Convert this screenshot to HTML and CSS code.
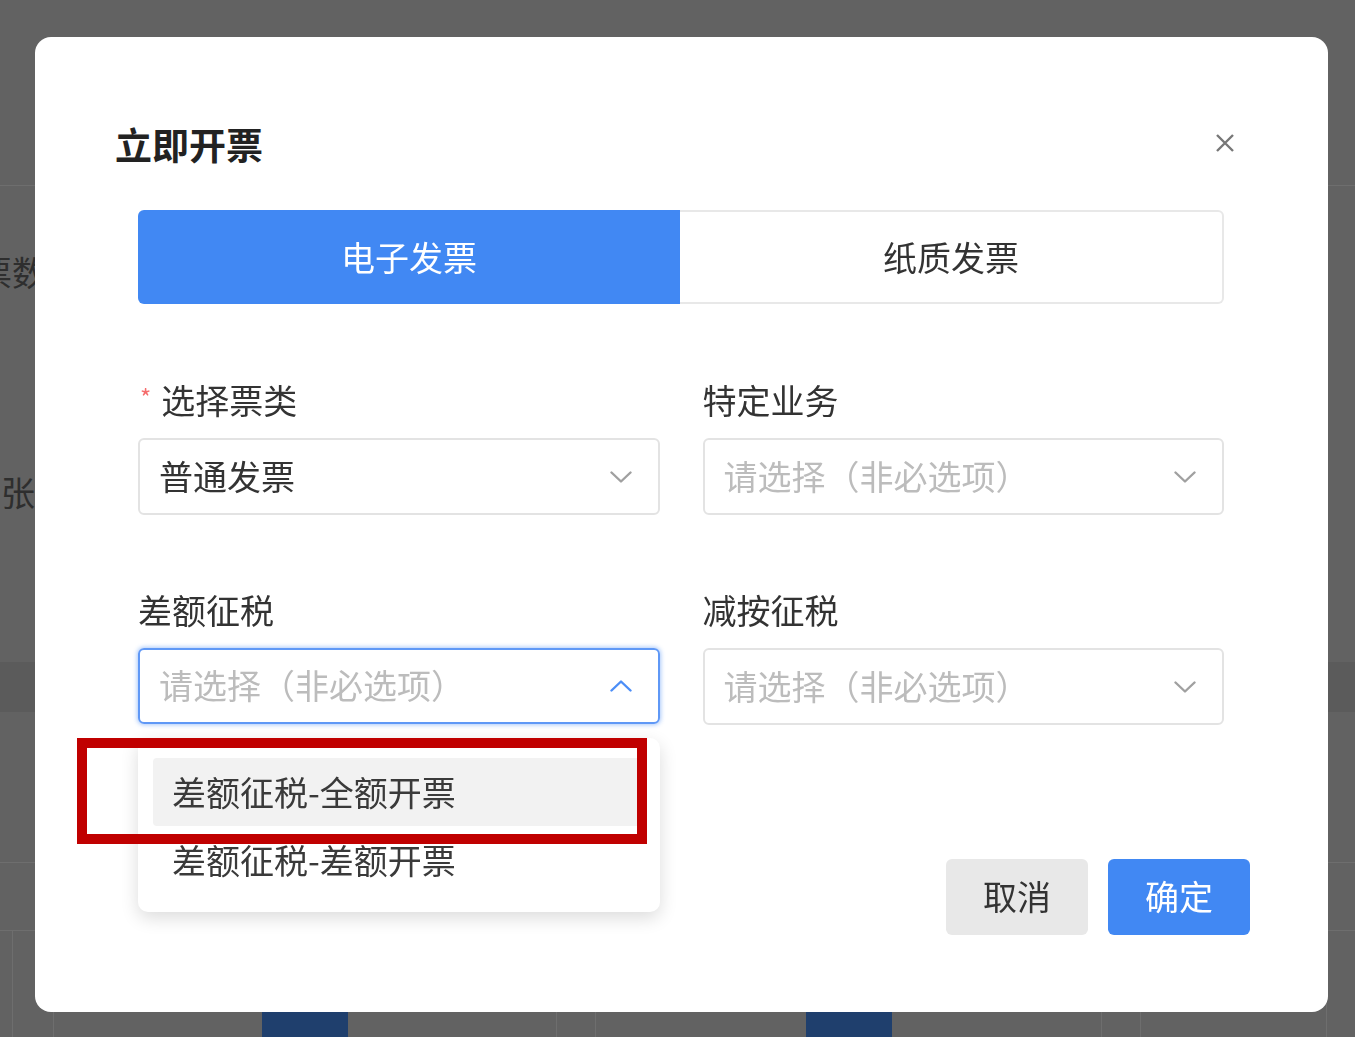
FILE: index.html
```html
<!DOCTYPE html>
<html lang="zh-CN">
<head>
    <meta charset="UTF-8">
    <meta name="viewport" content="width=device-width, initial-scale=1.0">
    <title>立即开票</title>
    <link rel="stylesheet" href="styles.css">
</head>
<body>
    <div class="page">
        <div class="page-head"></div>
        <div class="page-row row-count"><span class="page-cell cell-wide">票数</span></div>
        <div class="page-row row-unit"><span class="page-cell">张</span></div>
        <div class="page-gap"></div>
        <div class="page-band"></div>
        <div class="page-row row-empty"></div>
        <div class="page-row row-thin"></div>
        <div class="page-table">
            <div class="col" style="width:13px"></div>
            <div class="col" style="width:41px"></div>
            <div class="col" style="width:503px"><span class="qr"></span></div>
            <div class="col" style="width:39px"></div>
            <div class="col" style="width:506px"><span class="qr"></span></div>
            <div class="col" style="width:39px"></div>
            <div class="col" style="width:186px"></div>
            <div class="col col-last"></div>
        </div>
    </div>

    <div class="mask">
        <div class="dialog">
            <div class="dialog-header">
                <h2 class="dialog-title">立即开票</h2>
                <svg class="close" width="20" height="20" viewBox="0 0 20 20">
                    <path d="M2 2L18 18M18 2L2 18" />
                </svg>
            </div>

            <div class="dialog-body">
                <div class="tabs">
                    <div class="tab active">电子发票</div>
                    <div class="tab">纸质发票</div>
                </div>

                <div class="form">
                    <div class="field">
                        <div class="label"><span class="req">*</span>选择票类</div>
                        <div class="select">
                            <span>普通发票</span>
                            <svg class="arrow" width="22" height="12" viewBox="0 0 22 12"><path d="M1.5 1.5L11 10.5L20.5 1.5" /></svg>
                        </div>
                    </div>
                    <div class="field">
                        <div class="label">特定业务</div>
                        <div class="select">
                            <span class="placeholder">请选择（非必选项）</span>
                            <svg class="arrow" width="22" height="12" viewBox="0 0 22 12"><path d="M1.5 1.5L11 10.5L20.5 1.5" /></svg>
                        </div>
                    </div>
                    <div class="field">
                        <div class="label">差额征税</div>
                        <div class="select focus">
                            <span class="placeholder">请选择（非必选项）</span>
                            <svg class="arrow up" width="22" height="12" viewBox="0 0 22 12"><path d="M1.5 10.5L11 1.5L20.5 10.5" /></svg>
                            <div class="dropdown">
                                <div class="option hover">差额征税-全额开票</div>
                                <div class="option">差额征税-差额开票</div>
                                <div class="mark"></div>
                            </div>
                        </div>
                    </div>
                    <div class="field">
                        <div class="label">减按征税</div>
                        <div class="select">
                            <span class="placeholder">请选择（非必选项）</span>
                            <svg class="arrow" width="22" height="12" viewBox="0 0 22 12"><path d="M1.5 1.5L11 10.5L20.5 1.5" /></svg>
                        </div>
                    </div>
                </div>
            </div>

            <div class="dialog-footer">
                <button class="btn">取消</button>
                <button class="btn primary">确定</button>
            </div>
        </div>
    </div>
</body>
</html>
```

FILE: styles.css
```css
* { box-sizing: border-box; }

body {
    margin: 0;
    width: 1355px;
    height: 1037px;
    overflow: hidden;
    font-family: "Noto Sans CJK SC", "Noto Sans", sans-serif;
    background-color: #626262;
}

/* page behind the mask, already dimmed */
.page-head { height: 186px; border-bottom: 1px solid #6e6e6e; }
.page-row { display: flex; align-items: center; font-size: 34px; color: #2e2e2e; }
.page-cell { flex: none; width: 35px; display: flex; justify-content: flex-end; white-space: nowrap; }
.page-cell.cell-wide { width: 46px; }
.row-count { height: 170px; }
.row-unit { height: 270px; }
.page-gap { height: 36px; }
.page-band { height: 50px; background: #5b5b5b; }
.row-empty { height: 151px; border-bottom: 1px solid #6e6e6e; }
.row-thin { height: 68px; border-bottom: 1px solid #6e6e6e; }
.page-table { display: flex; height: 110px; }
.page-table .col {
    flex: none;
    border-right: 1px solid #6e6e6e;
    display: flex;
    justify-content: center;
    align-items: flex-end;
}
.page-table .col-last { flex: 1; border-right: none; }
.qr { width: 86px; height: 50px; background: #1f3f6d; }

/* dialog */
.mask {
    position: fixed;
    inset: 0;
    padding: 37px 27px 25px 35px;
    display: flex;
}
.dialog {
    flex: 1;
    background: #fff;
    border-radius: 16px;
    display: flex;
    flex-direction: column;
}
.dialog-header {
    display: flex;
    justify-content: space-between;
    align-items: center;
    padding: 84px 93px 0 80px;
}
.dialog-title {
    margin: 0;
    font-size: 37px;
    line-height: 46px;
    font-weight: 700;
    color: #222;
}
.close { margin-top: -3px; }
.close path { stroke: #777; stroke-width: 2.4; fill: none; }

.dialog-body { padding: 43px 104px 0 103px; }

.tabs { display: flex; height: 94px; }
.tab {
    flex: 1;
    display: flex;
    align-items: center;
    justify-content: center;
    padding-bottom: 2px;
    font-size: 34px;
    color: #333;
    border: 2px solid #e8e8e8;
    border-left: none;
    border-radius: 0 6px 6px 0;
}
.tab.active {
    background: #4188f3;
    color: #fff;
    border: none;
    border-radius: 6px 0 0 6px;
}

.form {
    display: grid;
    grid-template-columns: 1fr 1fr;
    column-gap: 43px;
    row-gap: 73px;
    margin-top: 74px;
}
.label {
    display: flex;
    align-items: center;
    height: 48px;
    padding-bottom: 5px;
    margin-bottom: 12px;
    font-size: 34px;
    color: #333;
}
.req {
    align-self: flex-start;
    margin: 4px 10px 0 2px;
    font-size: 24px;
    line-height: 30px;
    color: #f56c6c;
}
.select {
    position: relative;
    height: 77px;
    display: flex;
    align-items: center;
    justify-content: space-between;
    padding: 0 26px 3px 19px;
    border: 2px solid #e3e3e3;
    border-radius: 6px;
    font-size: 34px;
    color: #333;
}
.select.focus {
    height: 76px;
    border-color: #5f98f6;
    box-shadow: 0 0 4px 1px rgba(66, 136, 245, 0.45);
}
.arrow { margin-top: 3px; }
.placeholder { color: #bcbcbc; }
.arrow path { stroke: #a0a0a0; stroke-width: 2.4; fill: none; stroke-linecap: round; stroke-linejoin: round; }
.arrow.up path { stroke: #4c8ef7; }

.dropdown {
    position: absolute;
    left: -2px;
    right: -2px;
    top: calc(100% + 16px);
    padding: 20px 15px 18px;
    background: #fff;
    border-radius: 10px;
    box-shadow: 0 6px 18px rgba(0, 0, 0, 0.14);
    z-index: 2;
}
.option {
    height: 68px;
    display: flex;
    align-items: center;
    padding: 0 0 2px 19px;
    border-radius: 4px;
    color: #3a3a3a;
}
.option.hover { background: #f2f2f2; }
.mark {
    position: absolute;
    left: -61px;
    top: 0;
    width: 570px;
    height: 106px;
    border: 10px solid #c00000;
}

.dialog-footer {
    display: flex;
    justify-content: flex-end;
    gap: 20px;
    margin-top: 134px;
    padding: 0 78px 78px 0;
}
.btn {
    width: 142px;
    height: 76px;
    padding: 0 0 3px;
    border: none;
    border-radius: 6px;
    font-family: inherit;
    font-size: 34px;
    color: #333;
    background: #e8e8e8;
}
.btn.primary { background: #4188f3; color: #fff; }
```
